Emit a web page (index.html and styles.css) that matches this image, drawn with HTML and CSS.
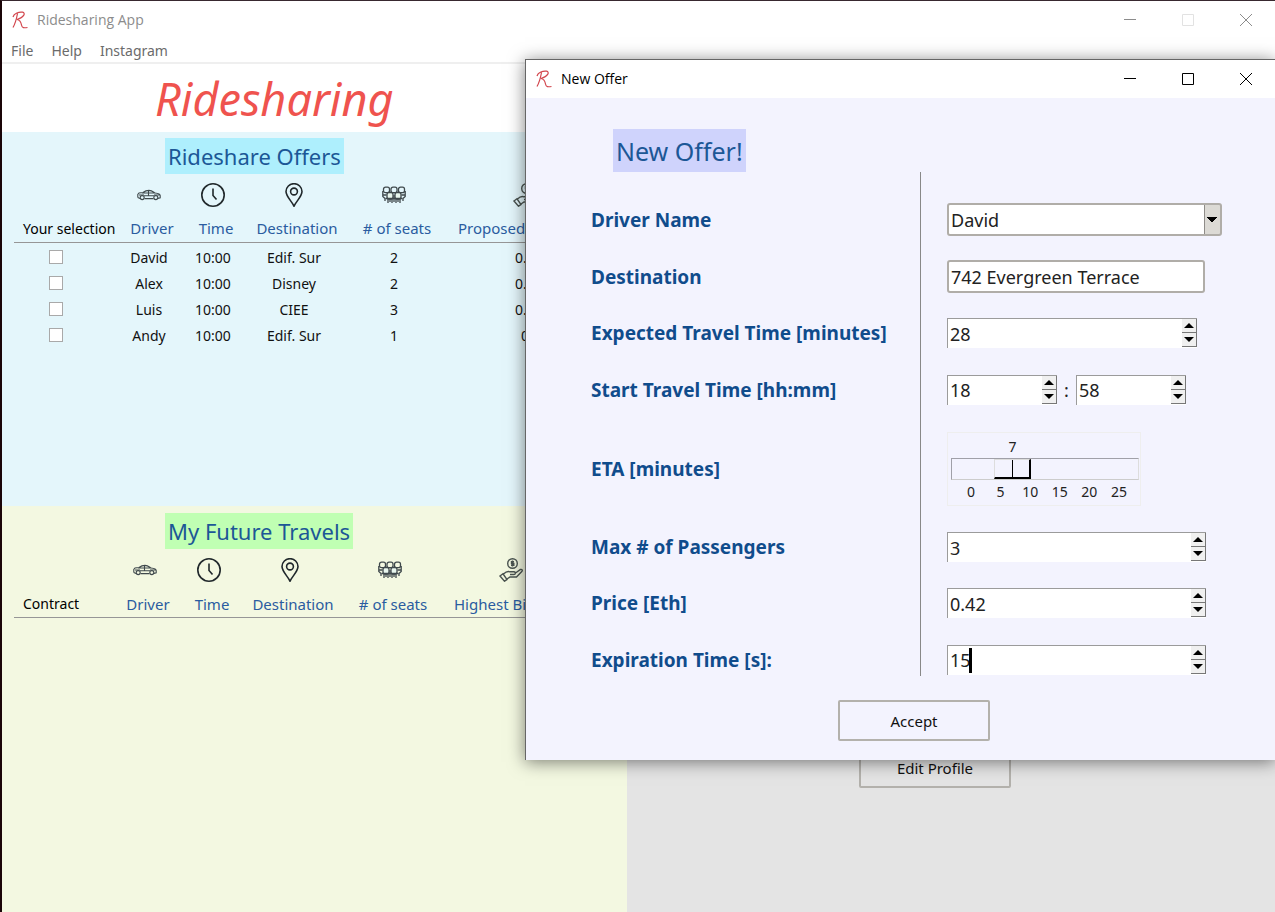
FILE: index.html
```
<!DOCTYPE html>
<html lang="en">
<head>
<meta charset="utf-8">
<title>Ridesharing App</title>
<link rel="stylesheet" href="styles.css">
</head>
<body>
<svg class="sprite" aria-hidden="true">
  <symbol id="i-logo" viewBox="0 0 16 18"><path d="M5.500 2.500C4.500 8 3 13 1 16.500M1 6C2 2 7 .8 10.500 1.200C14 2 12 6.500 5 8.500C8 9 9 11 9.500 14C10 17 12 17 15.500 16.500" fill="none" stroke="#d2454c" stroke-width="1.200"/></symbol>
  <symbol id="i-car" viewBox="0 0 24 12"><g fill="none" stroke="#3f494c" stroke-width="1.100"><path d="M.8 8.500V5.500L2 4L6 3.500C8 2 9 1.400 12 1.400C15 1.400 16 2.700 18 4C21 4.300 23.200 5 23.200 6.500V8.800L21 9.400M.8 8.500L3 9.400M7.500 9.600H16.500M5 4H18.500M11.500 1.400V6.500M2 6H7M17 6H23M7 6.800H17"/><circle cx="5.200" cy="8.600" r="2"/><circle cx="18.800" cy="8.600" r="2"/></g></symbol>
  <symbol id="i-clock" viewBox="0 0 24 24"><circle cx="12" cy="12" r="11.200" fill="none" stroke="#20282b" stroke-width="1.600"/><path d="M12 5.500V12.500L15.500 16.500" fill="none" stroke="#20282b" stroke-width="1.600"/></symbol>
  <symbol id="i-pin" viewBox="0 0 24 24"><path d="M12 23.200C10 18.500 4 13.500 4 8.500A8 7.800 0 0 1 20 8.500C20 13.500 14 18.500 12 23.200Z" fill="none" stroke="#20282b" stroke-width="1.600"/><circle cx="12" cy="8.500" r="3.400" fill="none" stroke="#20282b" stroke-width="1.600"/></symbol>
  <symbol id="i-people" viewBox="0 0 24 18"><g fill="none" stroke="#3f494c" stroke-width="1.300"><rect x="1.500" y="1.200" width="6" height="5.500" rx="2"/><rect x="9" y="1.200" width="6" height="5.500" rx="2"/><rect x="16.500" y="1.200" width="6" height="5.500" rx="2"/><path d="M.8 5V10.500L3 12.500V15M23.200 5V10.500L21 12.500V15M1 9H4.500M19.500 9H23"/><rect x="5" y="6.500" width="6" height="6.500" rx="2" fill="#e9f7ee"/><rect x="13" y="6.500" width="6" height="6.500" rx="2" fill="#e9f7ee"/><path d="M3.500 12.500H20.500M6 13V17M8 13V16M10 13V17M12 9V16M14 13V17M16 13V16M18 13V17"/></g></symbol>
  <symbol id="i-pay" viewBox="0 0 24 24"><g fill="none" stroke="#4a5350" stroke-width="1.400"><circle cx="13.500" cy="5.500" r="4.800"/><path d="M15 3.800H12.500V5.500H14.800V7.200H12M13.500 2.500V8.500M1 18L4 15.800L8 21.500L5.500 23.200ZM4.500 16C7 13.500 9 13 11 13.800H15C17 14 16.500 16.500 15 16.500H11M16.500 15L21.500 11.500C23 11 23.800 12.500 22.800 13.500L17.500 19H11L8 21"/></g></symbol>
  <symbol id="i-min" viewBox="0 0 12 12"><path d="M0 5.500H12" stroke="currentColor"/></symbol>
  <symbol id="i-max" viewBox="0 0 12 12"><path d="M.5.5H11.500V11.500H.5Z" fill="none" stroke="currentColor"/></symbol>
  <symbol id="i-close" viewBox="0 0 12 12"><path d="M0 0L12 12M12 0L0 12" stroke="currentColor"/></symbol>
</svg>

<div class="app">
  <header class="titlebar inactive">
    <svg class="logo"><use href="#i-logo"/></svg>
    <span class="titlebar-text">Ridesharing App</span>
    <button class="win" aria-label="Minimize"><svg><use href="#i-min"/></svg></button>
    <button class="win disabled" aria-label="Maximize" disabled><svg><use href="#i-max"/></svg></button>
    <button class="win" aria-label="Close"><svg><use href="#i-close"/></svg></button>
  </header>
  <nav class="menubar">
    <a href="#file">File</a><a href="#help">Help</a><a href="#instagram">Instagram</a>
  </nav>
  <div class="brand"><h1>Ridesharing</h1></div>

  <main class="panels">
    <section class="offers">
      <h2>Rideshare Offers</h2>
      <table class="rides">
        <colgroup><col class="c-first"><col class="c-driver"><col class="c-time"><col class="c-dest"><col class="c-seats"><col class="c-price"></colgroup>
        <thead>
          <tr class="icons"><td></td><td><svg class="car"><use href="#i-car"/></svg></td><td><svg><use href="#i-clock"/></svg></td><td><svg><use href="#i-pin"/></svg></td><td><svg class="people"><use href="#i-people"/></svg></td><td><svg><use href="#i-pay"/></svg></td></tr>
          <tr class="labels"><th>Your selection</th><th>Driver</th><th>Time</th><th>Destination</th><th># of seats</th><th>Proposed Price</th></tr>
        </thead>
        <tbody>
          <tr><td><input type="checkbox" aria-label="Select David"></td><td>David</td><td>10:00</td><td>Edif. Sur</td><td>2</td><td>0.4</td></tr>
          <tr><td><input type="checkbox" aria-label="Select Alex"></td><td>Alex</td><td>10:00</td><td>Disney</td><td>2</td><td>0.4</td></tr>
          <tr><td><input type="checkbox" aria-label="Select Luis"></td><td>Luis</td><td>10:00</td><td>CIEE</td><td>3</td><td>0.4</td></tr>
          <tr><td><input type="checkbox" aria-label="Select Andy"></td><td>Andy</td><td>10:00</td><td>Edif. Sur</td><td>1</td><td>0</td></tr>
        </tbody>
      </table>
    </section>
    <section class="travels">
      <h2>My Future Travels</h2>
      <table class="rides">
        <colgroup><col class="c-first"><col class="c-driver"><col class="c-time"><col class="c-dest"><col class="c-seats"><col class="c-price"></colgroup>
        <thead>
          <tr class="icons"><td></td><td><svg class="car"><use href="#i-car"/></svg></td><td><svg><use href="#i-clock"/></svg></td><td><svg><use href="#i-pin"/></svg></td><td><svg class="people"><use href="#i-people"/></svg></td><td><svg><use href="#i-pay"/></svg></td></tr>
          <tr class="labels"><th>Contract</th><th>Driver</th><th>Time</th><th>Destination</th><th># of seats</th><th>Highest Bid</th></tr>
        </thead>
      </table>
    </section>
    <section class="profile"><button class="btn">Edit Profile</button></section>
  </main>
</div>

<div class="dialog" role="dialog" aria-label="New Offer">
  <header class="titlebar">
    <svg class="logo"><use href="#i-logo"/></svg>
    <span class="titlebar-text">New Offer</span>
    <button class="win" aria-label="Minimize"><svg><use href="#i-min"/></svg></button>
    <button class="win" aria-label="Maximize"><svg><use href="#i-max"/></svg></button>
    <button class="win" aria-label="Close"><svg><use href="#i-close"/></svg></button>
  </header>
  <form class="offer-form">
    <h2>New Offer!</h2>
    <div class="fields">
      <div class="divider"></div>
      <label for="driver">Driver Name</label>
      <div class="field"><select id="driver" class="combo"><option>David</option></select></div>
      <label for="dest">Destination</label>
      <div class="field"><input id="dest" class="entry" type="text" value="742 Evergreen Terrace"></div>
      <label for="travel">Expected Travel Time [minutes]</label>
      <div class="field"><div class="spin medium"><input id="travel" type="text" inputmode="numeric" value="28"><div class="steps"><button type="button" aria-label="Increase"></button><button type="button" aria-label="Decrease"></button></div></div></div>
      <label for="hour">Start Travel Time [hh:mm]</label>
      <div class="field"><div class="spin short"><input id="hour" type="text" inputmode="numeric" value="18"><div class="steps"><button type="button" aria-label="Increase"></button><button type="button" aria-label="Decrease"></button></div></div><span class="colon">:</span><div class="spin short"><input aria-label="Minutes" type="text" inputmode="numeric" value="58"><div class="steps"><button type="button" aria-label="Increase"></button><button type="button" aria-label="Decrease"></button></div></div></div>
      <label for="eta">ETA [minutes]</label>
      <div class="field"><div class="scale">
        <div class="scale-row"><output for="eta" style="margin-left:calc((100% - 20px) * 0.28)">7</output></div>
        <input id="eta" type="range" min="0" max="25" value="7">
        <div class="scale-row"><span>0</span><span>5</span><span>10</span><span>15</span><span>20</span><span>25</span></div>
      </div></div>
      <label for="max">Max # of Passengers</label>
      <div class="field"><div class="spin long"><input id="max" type="text" inputmode="numeric" value="3"><div class="steps"><button type="button" aria-label="Increase"></button><button type="button" aria-label="Decrease"></button></div></div></div>
      <label for="price">Price [Eth]</label>
      <div class="field"><div class="spin long"><input id="price" type="text" inputmode="decimal" value="0.42"><div class="steps"><button type="button" aria-label="Increase"></button><button type="button" aria-label="Decrease"></button></div></div></div>
      <label for="expire">Expiration Time [s]:</label>
      <div class="field"><div class="spin long"><input id="expire" type="text" inputmode="numeric" value="15"><span class="caret"></span><div class="steps"><button type="button" aria-label="Increase"></button><button type="button" aria-label="Decrease"></button></div></div></div>
    </div>
    <button type="button" class="btn accept">Accept</button>
  </form>
</div>
</body>
</html>
```
FILE: styles.css
```
* { box-sizing: border-box; }
body {
  margin: 0;
  font-family: "Noto Sans", "Open Sans", sans-serif;
  font-size: 14px;
  color: #111;
  position: relative;
  overflow: hidden;
}
h1, h2 { margin: 0; font-weight: 400; }
button, input, select { font: inherit; color: inherit; margin: 0; }
.sprite { position: absolute; width: 0; height: 0; }

.app {
  min-height: 100vh;
  display: flex;
  flex-direction: column;
  background: #fff;
  border-left: 2px solid #1a0508;
  border-top: 1px solid #38282f;
}
.titlebar {
  display: flex;
  align-items: center;
  height: 38px;
  padding-left: 10px;
  background: #fff;
  color: #000;
  font-family: "Open Sans", "Noto Sans", sans-serif;
  font-size: 14px;
  line-height: 18px;
}
.titlebar.inactive { color: #8c8c8c; }
.logo { width: 16px; height: 18px; margin-right: 9px; }
.titlebar-text { flex: 1; }
.win { width: 58px; height: 38px; padding: 0; border: 0; background: none; display: grid; place-items: center; }
.win svg { width: 12px; height: 12px; display: block; }
.win.disabled { color: #e2e2e2; }
.menubar {
  display: flex;
  gap: 18px;
  height: 25px;
  padding: 0 9px;
  line-height: 24px;
  border-bottom: 2px solid #efefef;
}
.menubar a { color: #6b6b6b; text-decoration: none; }
.brand { height: 68px; padding-left: 153px; }
.brand h1 { font-style: italic; font-size: 45px; line-height: 70px; color: #ef534e; }

.panels {
  flex: 1;
  display: grid;
  grid-template-columns: 27fr 28fr;
  grid-template-rows: 12fr 13fr;
}
.offers { background: #e4f6fb; padding: 6px 0 0 12px; overflow: hidden; }
.travels { background: #f3f8e1; padding: 7px 0 0 12px; overflow: hidden; grid-row: 2; }
.profile {
  grid-row: 1 / 3;
  grid-column: 2;
  background: #e4e4e4;
  display: flex;
  flex-direction: column;
  justify-content: flex-end;
  align-items: center;
  padding: 0 32px 124px 0;
}
.offers h2, .travels h2 {
  width: max-content;
  margin-left: 151px;
  padding: 1px 3px 0;
  font-size: 22px;
  line-height: 35px;
  color: #1c5796;
  background: #aeeffd;
}
.travels h2 { background: #c0ffb3; }
.rides { table-layout: fixed; width: 586px; border-collapse: collapse; margin-top: 4px; text-align: center; }
.c-first { width: 108px; }
.c-driver { width: 54px; }
.c-time { width: 74px; }
.c-dest { width: 88px; }
.c-seats { width: 112px; }
.travels .rides { width: 562px; }
.travels .c-first { width: 104px; }
.rides td, .rides th { padding: 0; white-space: nowrap; }
.icons td { height: 34px; }
.icons svg { display: block; width: 24px; height: 24px; margin: 0 auto; }
.icons .car { height: 12px; }
.icons .people { height: 18px; }
.labels th { height: 30px; padding: 3px 0 0 6px; font-weight: 400; font-size: 15px; color: #2a5ca0; border-bottom: 1px solid #969696; }
.labels th:first-child { font-size: 14px; color: #000; text-align: left; padding-left: 9px; }
.labels th:last-child { text-align: left; padding-left: 8px; }
.rides tbody td { height: 26px; padding-top: 4px; }
.rides tbody td:first-child { text-align: left; padding-left: 35px; }
.rides input { appearance: none; display: block; width: 14px; height: 14px; background: #fff; border: 1px solid #a9a9a9; }

.btn {
  width: 152px;
  height: 41px;
  border: 2px solid #b3b1ac;
  border-radius: 2px;
  background: transparent;
  font-size: 15px;
}

.dialog {
  position: absolute;
  top: 59px;
  left: 525px;
  right: 0;
  background: #f3f3fe;
  border-top: 1px solid #666;
  border-left: 1px solid #666;
  box-shadow: 0 2px 16px rgba(0, 0, 0, .5);
}
.offer-form { padding: 31px 0 19px 65px; }
.offer-form h2 {
  width: max-content;
  margin-left: 22px;
  padding: 2px 3px 0;
  font-size: 25px;
  line-height: 41px;
  color: #1c5796;
  background: #cfd3fc;
}
.fields {
  display: grid;
  grid-template-columns: 329px 27px 1fr;
  grid-template-rows: 57px 57px 56px 57px 101px 56px 56px 57px;
  align-items: center;
  margin-top: 19px;
}
.divider { grid-column: 2; grid-row: 1 / 9; align-self: stretch; margin: -19px 0 12px; border-left: 1px solid #888; }
.fields label { grid-column: 1; font-size: 19px; line-height: 26px; font-weight: 700; color: #104c8c; white-space: nowrap; }
.field { grid-column: 3; display: flex; align-items: center; font-size: 18px; color: #222; }
.combo, .entry { height: 33px; border: 2px solid #b0ada8; border-radius: 3px; background-color: #fff; padding: 0 2px; }
.entry { width: 258px; }
.combo {
  width: 275px;
  appearance: none;
  background-image: conic-gradient(from -45deg at 50% 100%, #000 90deg, transparent 0), linear-gradient(#8f8c88, #8f8c88), linear-gradient(#dcdad5, #dcdad5);
  background-size: 10px 5px, 1px 100%, 15px 100%;
  background-position: right 3px center, right 15px top, right top;
  background-repeat: no-repeat;
}
.spin { position: relative; display: flex; height: 30px; background: #fff; border-top: 1px solid #9b9b9b; border-left: 1px solid #9b9b9b; }
.spin input { flex: 1; min-width: 0; border: 0; padding: 0 0 0 2px; background: none; outline: 0; }
.short { width: 110px; }
.medium { width: 250px; }
.long { width: 259px; }
.colon { width: 19px; text-align: center; }
.steps { width: 15px; display: flex; flex-direction: column; }
.steps button { height: 14px; padding: 0; border: 0; border-right: 1px solid #777; border-bottom: 1px solid #777; background: #f0f0f0; display: grid; place-items: center; }
.steps button::before { content: ""; border: 5px solid transparent; border-top: 0; border-bottom-color: #000; }
.steps button + button::before { border: 5px solid transparent; border-bottom: 0; border-top-color: #000; }
.caret { position: absolute; left: 21px; top: 2px; width: 3px; height: 25px; background: #000; }

.scale { width: 194px; padding: 2px 1px 2px 3px; border: 1px solid #eee; font-size: 14px; line-height: 23px; }
.scale-row { display: flex; justify-content: space-between; margin: 0 10px; text-align: center; }
.scale-row > * { width: 20px; }
.scale input { appearance: none; display: block; width: 188px; height: 22px; padding: 0 1px; background: none; border: 1px solid #a0a0a8; border-right-color: #ddd; border-bottom-color: #ccc; }
.scale input::-webkit-slider-thumb {
  appearance: none;
  width: 37px;
  height: 20px;
  border: 1px solid #ddd;
  border-right: 2px solid #000;
  border-bottom: 2px solid #000;
  background: linear-gradient(#000, #000) center / 1px 100% no-repeat #f3f3fe;
}
.accept { display: block; margin: 12px 0 0 247px; }
```
